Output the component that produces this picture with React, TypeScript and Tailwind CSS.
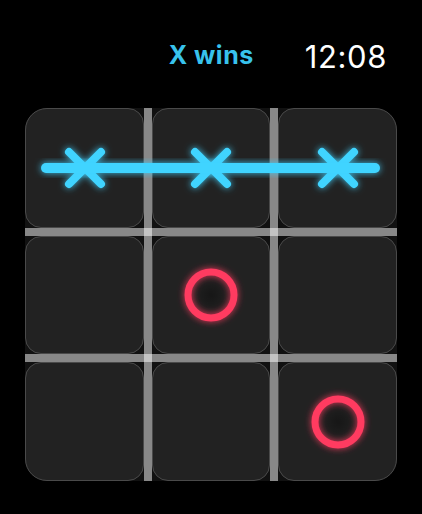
import React from 'react';

type Mark = 'x' | 'o' | null;

const board: Mark[] = ['x', 'x', 'x', null, 'o', null, null, null, 'o'];

// grid positions for the 3x3 cells inside the 5x5 track grid (lines sit in tracks 2 and 4)
const cellPlace = [
    'col-start-1 row-start-1 rounded-[16px] rounded-tl-[22px]',
    'col-start-3 row-start-1 rounded-[16px]',
    'col-start-5 row-start-1 rounded-[16px] rounded-tr-[22px]',
    'col-start-1 row-start-3 rounded-[16px]',
    'col-start-3 row-start-3 rounded-[16px]',
    'col-start-5 row-start-3 rounded-[16px]',
    'col-start-1 row-start-5 rounded-[16px] rounded-bl-[22px]',
    'col-start-3 row-start-5 rounded-[16px]',
    'col-start-5 row-start-5 rounded-[16px] rounded-br-[22px]',
];

function Glow({ id, color, blur }: { id: string; color: string; blur: number }) {
    return (
        <filter id={id} x="-50%" y="-50%" width="200%" height="200%">
            <feGaussianBlur in="SourceAlpha" stdDeviation={blur} result="b" />
            <feFlood floodColor={color} floodOpacity="0.9" />
            <feComposite in2="b" operator="in" result="g" />
            <feMerge>
                <feMergeNode in="g" />
                <feMergeNode in="SourceGraphic" />
            </feMerge>
        </filter>
    );
}

function XMark({ id }: { id: string }) {
    return (
        <svg width="60" height="60" viewBox="0 0 60 60" className="overflow-visible">
            <defs>
                <Glow id={id} color="#3fd2ff" blur={3.5} />
            </defs>
            <g filter={`url(#${id})`} stroke="#40d4ff" strokeWidth="8" strokeLinecap="round">
                <line x1="14" y1="14" x2="46" y2="46" />
                <line x1="46" y1="14" x2="14" y2="46" />
            </g>
        </svg>
    );
}

function OMark({ id }: { id: string }) {
    return (
        <svg width="70" height="70" viewBox="0 0 70 70" className="overflow-visible">
            <defs>
                <Glow id={id} color="#ff3a60" blur={3.5} />
                <radialGradient id={`${id}-in`}>
                    <stop offset="0%" stopColor="#000" stopOpacity="0.35" />
                    <stop offset="100%" stopColor="#000" stopOpacity="0" />
                </radialGradient>
            </defs>
            <circle cx="35" cy="35" r="20" fill={`url(#${id}-in)`} />
            <circle cx="35" cy="35" r="23" fill="none" stroke="#ff3a60" strokeWidth="7" filter={`url(#${id})`} />
        </svg>
    );
}

export default function App() {
    return (
        <div className="w-[422px] h-[514px] bg-black overflow-hidden" style={{ fontFamily: 'Inter, "Noto Sans", sans-serif' }}>
            {/* Status row */}
            <div className="h-[108px] flex items-start justify-end gap-[51px] pr-[35px] pt-[41px]">
                <span className="mt-[2px] text-[25px] leading-none font-bold tracking-[0.02em] text-[#38c2ec]">X wins</span>
                <span className="text-[31px] leading-none font-normal tracking-[0.02em] text-white">12:08</span>
            </div>

            {/* Board */}
            <div className="relative ml-[25px] w-[372px] h-[373px] rounded-[22px] bg-[#111111] grid grid-cols-[119px_8px_118px_8px_119px] grid-rows-[120px_8px_118px_8px_119px]">
                {board.map((m, i) => (
                    <div
                        key={i}
                        className={`${cellPlace[i]} bg-[#222222] border-[1.5px] border-[#4a4a4a] flex items-center justify-center`}
                    >
                        {m === 'x' && <XMark id={`gx${i}`} />}
                        {m === 'o' && <OMark id={`go${i}`} />}
                    </div>
                ))}

                {/* grid lines */}
                <div className="col-start-2 row-start-1 row-span-5 bg-white/50" />
                <div className="col-start-4 row-start-1 row-span-5 bg-white/50" />
                <div className="row-start-2 col-start-1 col-span-5 bg-white/50" />
                <div className="row-start-4 col-start-1 col-span-5 bg-white/50" />

                {/* winning strike */}
                <svg className="absolute left-0 top-0 overflow-visible pointer-events-none" width="372" height="373" viewBox="0 0 372 373">
                    <defs>
                        <Glow id="gwin" color="#3fd2ff" blur={3.5} />
                    </defs>
                    <rect x="16" y="55" width="339" height="10" rx="5" fill="#40d4ff" filter="url(#gwin)" />
                </svg>
            </div>
        </div>
    );
}
